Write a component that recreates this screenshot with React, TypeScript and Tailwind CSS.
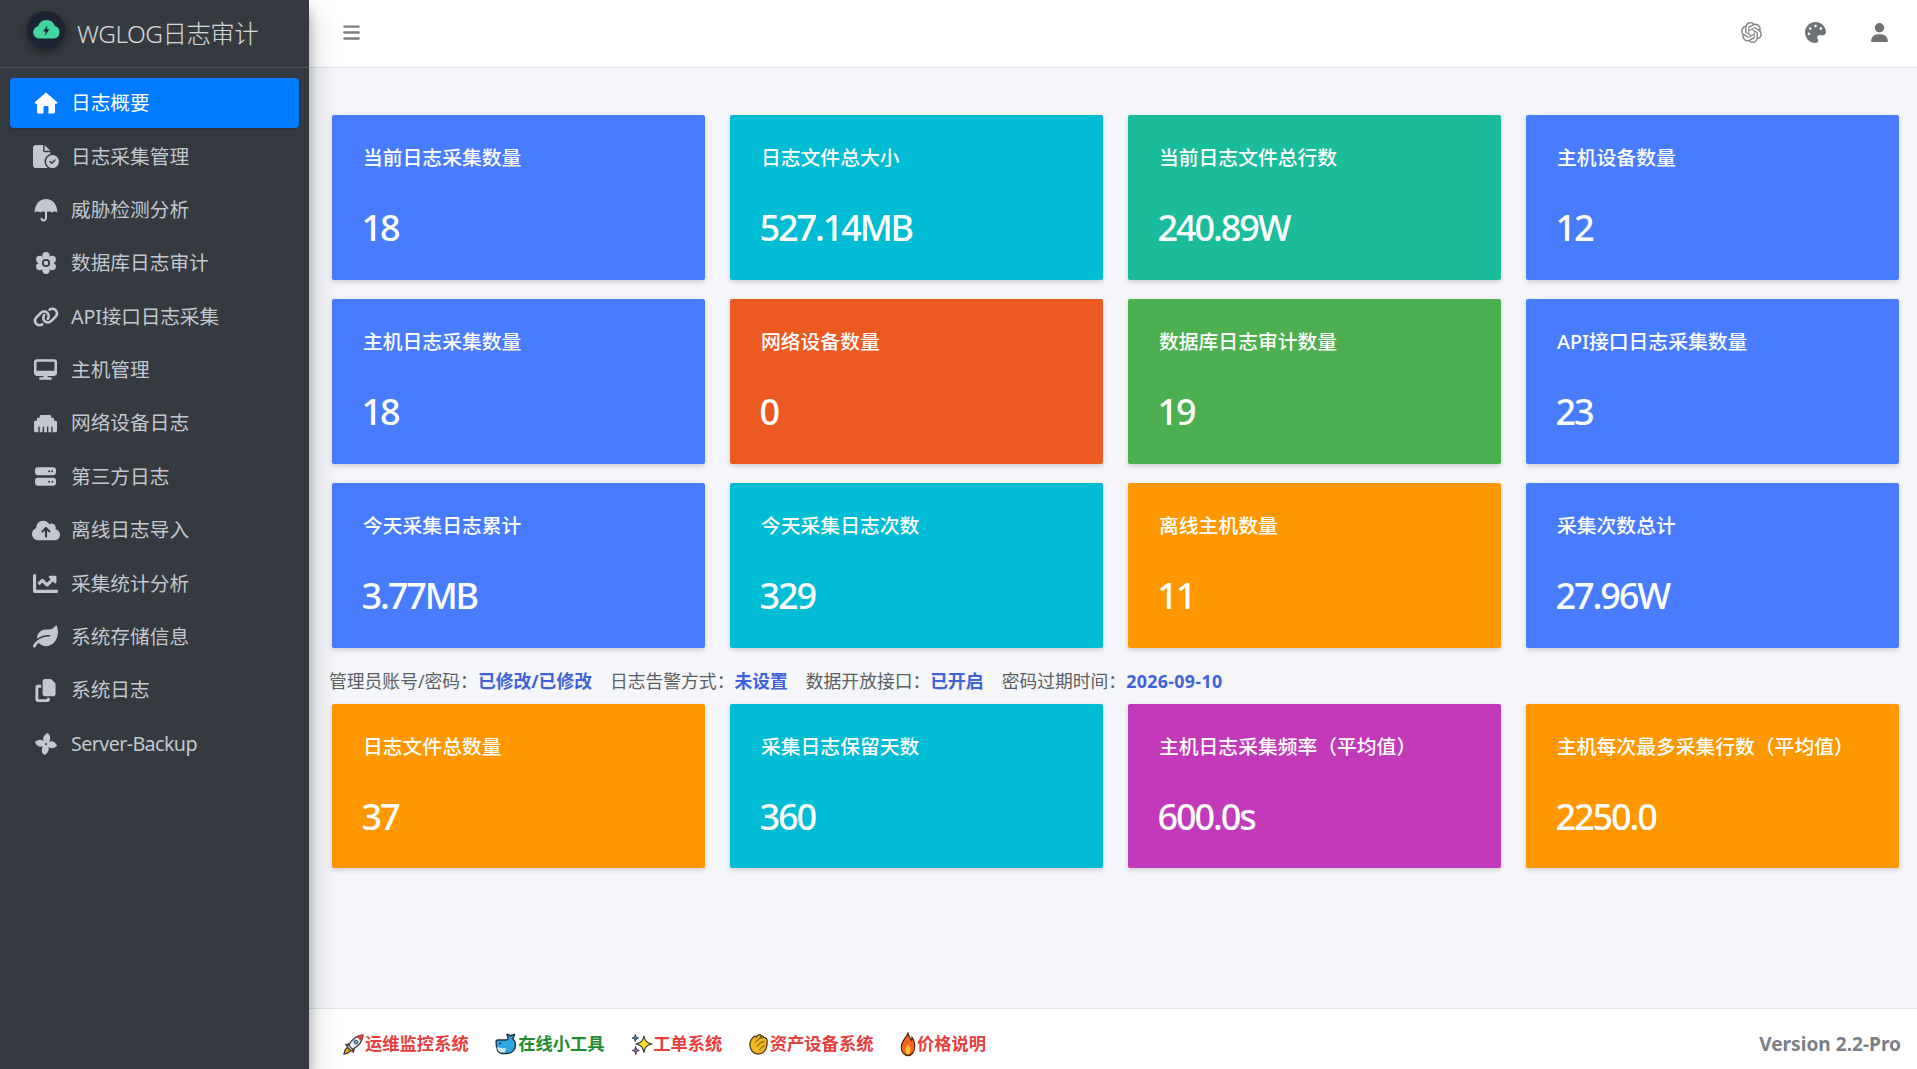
import {
  FaBars,
  FaCloudArrowUp,
  FaCopy,
  FaDesktop,
  FaEthernet,
  FaFileCircleCheck,
  FaLink,
  FaPalette,
  FaServer,
  FaUser,
} from "react-icons/fa6";
import { FaChartLine, FaLeaf } from "react-icons/fa";
import { SiOpenai } from "react-icons/si";
import type { ReactNode } from "react";

const HomeIcon = () => (
  <svg viewBox="0 0 24 24" className="w-[24px] h-[24px]" fill="currentColor">
    <path
      fillRule="evenodd"
      d="M12 1.500 23 11c.6.600.2 1.700-.7 1.700H21v8c0 1-.8 1.800-1.800 1.800H4.800c-1 0-1.800-.8-1.800-1.800v-8H1.700c-.9 0-1.300-1.100-.7-1.700ZM9.500 16.500v6h5v-6c0-1-.8-1.500-1.500-1.500h-2c-.7 0-1.500.5-1.500 1.500Z"
    />
  </svg>
);

const GearIcon = () => (
  <svg viewBox="0 0 24 24" className="w-[24px] h-[24px]" fill="currentColor">
    <circle cx="12" cy="4.800" r="3.700" />
    <circle cx="12" cy="19.200" r="3.700" />
    <circle cx="5.800" cy="8.400" r="3.700" />
    <circle cx="18.200" cy="8.400" r="3.700" />
    <circle cx="5.800" cy="15.600" r="3.700" />
    <circle cx="18.200" cy="15.600" r="3.700" />
    <circle cx="12" cy="12" r="7" />
    <circle cx="12" cy="12" r="3.200" fill="none" stroke="#343a40" strokeWidth="1.800" />
  </svg>
);

const UmbrellaIcon = () => (
  <svg viewBox="0 0 24 24" className="w-[24px] h-[24px]" fill="currentColor">
    <path d="M.5 14.500C1 6 5.500 1 12 1s11 5 11.500 13.500c-2-1.500-4-1.500-5.700 0-1.800-1.500-3.900-1.500-5.800 0-1.900-1.500-3.900-1.500-5.800 0-1.700-1.500-3.700-1.500-5.700 0Z" />
    <path d="M11 13h2v7c0 2-1.400 3.400-3.300 3.400-1.500 0-2.800-1-3.200-2.400-.2-.6.100-1.100.7-1.300.5-.2 1.100.1 1.300.7.100.5.600.9 1.200.9.800 0 1.300-.5 1.300-1.300Z" />
  </svg>
);

const FanIcon = () => (
  <svg viewBox="0 0 24 24" className="w-[24px] h-[24px]" fill="currentColor">
    {[0, 90, 180, 270].map((deg) => (
      <path
        key={deg}
        transform={`rotate(${deg} 12 12)`}
        d="M12 12C8.500 9.500 7.500 4 13.500 1c2.500 1.500 3.500 5 2 8-.8 1.700-2 2.500-3.500 3Z"
      />
    ))}
    <circle cx="12" cy="12" r="1" fill="#343a40" />
  </svg>
);

const LogoIcon = () => (
  <svg viewBox="0 0 24 24" className="w-[31px] h-[31px]">
    <path
      fill="#43d6a0"
      d="M6.500 19a4.800 4.800 0 0 1-1-9.500 6.800 6.800 0 0 1 13-.2A5 5 0 0 1 18 19Z"
    />
    <path fill="#1c2333" d="M12.800 8.500 9.500 13.500h2l-.8 3.500 3.500-5.200h-2.100Z" />
  </svg>
);

const RocketEmoji = () => (
  <svg viewBox="0 0 24 24" className="w-[23px] h-[23px] shrink-0">
    <path fill="#f59e0b" stroke="#333" strokeWidth="1.200" d="M6 15c-2.500 1-3.500 4-4 7 3-.5 6-1.500 7-4Z" />
    <path fill="#e8eef2" stroke="#333" strokeWidth="1.200" d="M22 2c-6 .5-11 3-15 11l4 4c8-4 10.500-9 11-15Z" />
    <path fill="#e53935" d="M22 2c-2.500.2-4.700.8-6.700 1.900l4.800 4.800C21.200 6.700 21.800 4.500 22 2Z" />
    <circle cx="14.500" cy="9.500" r="2" fill="#4aa8e0" stroke="#333" strokeWidth=".8" />
    <path fill="#e53935" stroke="#333" strokeWidth="1" d="M8 11 3.500 12l2 2.500ZM13 16l-1 4.500-2.500-2Z" />
  </svg>
);

const WhaleEmoji = () => (
  <svg viewBox="0 0 24 24" className="w-[24px] h-[24px] shrink-0">
    <path
      fill="#2ea8e5"
      stroke="#1d2a3a"
      strokeWidth="1.300"
      d="M2 9.500c0-1 1-1.500 2-1.500h8.500c1 0 1.500-1 1.500-2 0-1.500-1-2.500-1-3.500 1.500 0 3 .8 3.500 1.500C17.500 3 19 2.500 20.500 2.500c0 1.500-.8 3-2 4 1.700 1.500 3 3.500 3 6.500 0 5-3.500 8.500-9 8.500H8c-4 0-6-5-6-12.500Z"
    />
    <path fill="#d6eef9" d="M3 15c2 1 6 1.500 9 1l-1 4.500H7.500C5 20.500 3.500 18 3 15Z" />
    <circle cx="6" cy="11.500" r="1" fill="#1d2a3a" />
  </svg>
);

const SparkleEmoji = () => (
  <svg viewBox="0 0 24 24" className="w-[23px] h-[23px] shrink-0">
    <path fill="#fbdc2e" stroke="#333" strokeWidth="1.100" d="M14.500 3c.8 5 2.500 7 8 8.500-5.500 1.500-7.200 3.500-8 9-.8-5.500-2.500-7.500-8-9 5.500-1.500 7.200-3.500 8-8.500Z" />
    <path fill="#3c7bd9" stroke="#333" strokeWidth="1" d="M5.500 1.500c.3 2.300 1 3.200 3.300 3.700-2.300.5-3 1.400-3.300 3.700-.3-2.300-1-3.200-3.300-3.700 2.300-.5 3-1.400 3.300-3.700Z" />
    <path fill="#9b5bd0" stroke="#333" strokeWidth="1" d="M6 14c.3 2.600 1.100 3.600 3.600 4.200-2.500.6-3.300 1.600-3.600 4.300-.3-2.700-1.100-3.700-3.600-4.300C4.900 17.600 5.700 16.600 6 14Z" />
  </svg>
);

const ClapEmoji = () => (
  <svg viewBox="0 0 24 24" className="w-[22px] h-[23px] shrink-0" preserveAspectRatio="none">
    <path fill="#f1b81f" stroke="#4a3512" strokeWidth="1.300" d="M2 12c0-4 3-7 5-8.500 1-.8 2 0 1.800 1 1-1.700 2.800-2.800 4.200-2.800 1.200 0 1.500 1 1 1.800 1.500-.6 3-.2 3 1 2.500 0 4 2 4 4.500 0 4-1.500 8-3.500 10.500-2 2.200-4 2.500-6.500 2.500C6 22 2 17.500 2 12Z" />
    <path fill="none" stroke="#4a3512" strokeWidth="1" d="M8 10c2-3 5-5 8-5M10 14c2-3 5-5 8-5M12 18c2-2 4-4 6-5" />
  </svg>
);

const FireEmoji = () => (
  <svg viewBox="0 0 24 24" className="w-[18px] h-[25px] shrink-0" preserveAspectRatio="none">
    <path fill="#f4661e" stroke="#4a2308" strokeWidth="1.400" d="M12 1c1 3.500 3 4.800 4.500 7 .6-1 .8-1.800.8-3 2.500 2.500 3.700 6 3.700 9 0 4.800-3.800 8.500-9 8.500S3 18.800 3 14.300C3 9 8.500 7 12 1Z" />
    <path fill="#fbc02d" d="M12 11c.5 2 2.800 3 3.300 5.700.4 2.500-1.300 4.600-3.300 4.600s-3.800-2-3.300-4.600c.4-2.400 2.700-3.300 3.300-5.700Z" />
  </svg>
);

const menu: { label: string; icon: ReactNode; active?: boolean; labelClass?: string }[] = [
  { label: "日志概要", icon: <HomeIcon />, active: true },
  { label: "日志采集管理", icon: <FaFileCircleCheck className="w-[26px] h-[25px]" /> },
  { label: "威胁检测分析", icon: <UmbrellaIcon /> },
  { label: "数据库日志审计", icon: <GearIcon /> },
  { label: "API接口日志采集", icon: <FaLink className="w-[26px] h-[26px]" />, labelClass: "tracking-[-0.15px]" },
  { label: "主机管理", icon: <FaDesktop className="w-[23px] h-[21px]" /> },
  { label: "网络设备日志", icon: <FaEthernet className="w-[23px] h-[23px]" /> },
  { label: "第三方日志", icon: <FaServer className="w-[21px] h-[21px]" /> },
  { label: "离线日志导入", icon: <FaCloudArrowUp className="w-[28px] h-[23px]" /> },
  { label: "采集统计分析", icon: <FaChartLine className="w-[25px] h-[25px]" /> },
  { label: "系统存储信息", icon: <FaLeaf className="w-[25px] h-[25px]" /> },
  { label: "系统日志", icon: <FaCopy className="w-[21px] h-[23px]" /> },
  { label: "Server-Backup", icon: <FanIcon />, labelClass: "tracking-[-0.6px]" },
];

const BLUE = "bg-[#487cff]";
const CYAN = "bg-[#00bcd4]";
const AMBER = "bg-[#ff9800]";

const topCards = [
  { title: "当前日志采集数量", value: "18", color: BLUE },
  { title: "日志文件总大小", value: "527.14MB", color: CYAN },
  { title: "当前日志文件总行数", value: "240.89W", color: "bg-[#1abc9c]" },
  { title: "主机设备数量", value: "12", color: BLUE },
  { title: "主机日志采集数量", value: "18", color: BLUE },
  { title: "网络设备数量", value: "0", color: "bg-[#ec5a21]" },
  { title: "数据库日志审计数量", value: "19", color: "bg-[#4caf50]" },
  { title: "API接口日志采集数量", value: "23", color: BLUE },
  { title: "今天采集日志累计", value: "3.77MB", color: BLUE },
  { title: "今天采集日志次数", value: "329", color: CYAN },
  { title: "离线主机数量", value: "11", color: AMBER },
  { title: "采集次数总计", value: "27.96W", color: BLUE },
];

const bottomCards = [
  { title: "日志文件总数量", value: "37", color: AMBER },
  { title: "采集日志保留天数", value: "360", color: CYAN },
  { title: "主机日志采集频率（平均值）", value: "600.0s", color: "bg-[#c23ab9]" },
  { title: "主机每次最多采集行数（平均值）", value: "2250.0", color: AMBER },
];

const status = [
  { label: "管理员账号/密码：", value: "已修改/已修改" },
  { label: "日志告警方式：", value: "未设置" },
  { label: "数据开放接口：", value: "已开启" },
  { label: "密码过期时间：", value: "2026-09-10", valueClass: "tracking-[0.36px]" },
];

const links = [
  { text: "运维监控系统", icon: <RocketEmoji />, color: "text-[#e8403f]" },
  { text: "在线小工具", icon: <WhaleEmoji />, color: "text-[#218c2e]" },
  { text: "工单系统", icon: <SparkleEmoji />, color: "text-[#e8403f]" },
  { text: "资产设备系统", icon: <ClapEmoji />, color: "text-[#e8403f]" },
  { text: "价格说明", icon: <FireEmoji />, color: "text-[#e8403f]" },
];

function StatCard({ title, value, color }: { title: string; value: string; color: string }) {
  return (
    <div className={`h-full rounded-[2px] pl-[31px] pt-[21px] text-white shadow-[0_2px_5px_rgba(0,0,0,0.16)] ${color}`}>
      <div className="text-[19.8px] font-medium leading-[44px] whitespace-nowrap">{title}</div>
      <div className="ml-[-1.5px] mt-[23px] text-[36px] font-medium leading-[50px] tracking-[-2.1px]">{value}</div>
    </div>
  );
}

export default function App() {
  return (
    <div className="flex h-[1069px] w-[1917px] overflow-hidden bg-[#f4f6f9] font-['Noto_Sans','Noto_Sans_CJK_SC',sans-serif]">
      {/* Sidebar */}
      <aside className="relative z-10 w-[309px] shrink-0 bg-[#343a40] shadow-[0_14px_28px_rgba(0,0,0,0.25),0_10px_10px_rgba(0,0,0,0.22)]">
        <div className="flex h-[68px] items-center gap-[12px] border-b border-[#4b545c] pl-[27px]">
          <div className="mb-[8px] flex h-[38px] w-[38px] items-center justify-center rounded-full bg-[#1c2333] shadow-[0_3px_8px_rgba(0,0,0,0.45)]">
            <LogoIcon />
          </div>
          <span className="mt-[2px] text-[24.45px] font-light text-white/80 tracking-[-0.5px]">WGLOG日志审计</span>
        </div>
        <nav className="flex flex-col gap-[3.4px] px-[10px] pt-[10px]">
          {menu.map((item) => (
            <div
              key={item.label}
              className={`flex h-[50px] items-center rounded-[4px] ${
                item.active
                  ? "bg-[#007bff] text-white shadow-[0_1px_3px_rgba(0,0,0,0.24)]"
                  : "text-[#c2c7d0]"
              }`}
            >
              <span className="flex w-[61px] shrink-0 items-center justify-center pl-[10px]">{item.icon}</span>
              <span className={`text-[19.7px] leading-none whitespace-nowrap ${item.labelClass ?? ""}`}>{item.label}</span>
            </div>
          ))}
        </nav>
      </aside>

      {/* Main column */}
      <div className="flex min-w-0 flex-1 flex-col">
        <header className="flex h-[68px] shrink-0 items-center justify-between border-b border-[#dee2e6] bg-white pb-[2px] pl-[34px] pr-[29px]">
          <FaBars className="h-[19px] w-[17px] text-[#7b7f84]" />
          <div className="flex items-center gap-[43px] text-[#6f7275]">
            <SiOpenai className="h-[21px] w-[21px] text-[#808080]" />
            <FaPalette className="h-[21px] w-[21px]" />
            <FaUser className="ml-[2px] h-[19px] w-[17px]" />
          </div>
        </header>

        <main className="flex-1 pl-[23px] pt-[47px]">
          <div className="grid w-[1567px] auto-rows-[165px] grid-cols-4 gap-x-[25px] gap-y-[19px]">
            {topCards.map((card) => (
              <StatCard key={card.title} {...card} />
            ))}
          </div>
          <div className="ml-[-3px] flex h-[56px] items-center gap-[18px] pt-[10px] text-[17.8px] whitespace-nowrap">
            {status.map((s) => (
              <span key={s.label} className="text-[#5b5f63]">
                {s.label}
                <span className={`font-bold text-[#3f62d8] ${s.valueClass ?? ""}`}>{s.value}</span>
              </span>
            ))}
          </div>
          <div className="grid w-[1567px] auto-rows-[164px] grid-cols-4 gap-x-[25px]">
            {bottomCards.map((card) => (
              <StatCard key={card.title} {...card} />
            ))}
          </div>
        </main>

        <footer className="flex h-[61px] shrink-0 items-center justify-between border-t border-[#dee2e6] bg-white pl-[33px] pr-[16px] pt-[10px]">
          <div className="flex items-center gap-[25.5px]">
            {links.map((link) => (
              <span key={link.text} className={`flex items-center text-[17.3px] font-bold whitespace-nowrap ${link.color}`}>
                {link.icon}
                {link.text}
              </span>
            ))}
          </div>
          <span className="text-[19.1px] font-bold text-[#7a8086]">Version 2.2-Pro</span>
        </footer>
      </div>
    </div>
  );
}
